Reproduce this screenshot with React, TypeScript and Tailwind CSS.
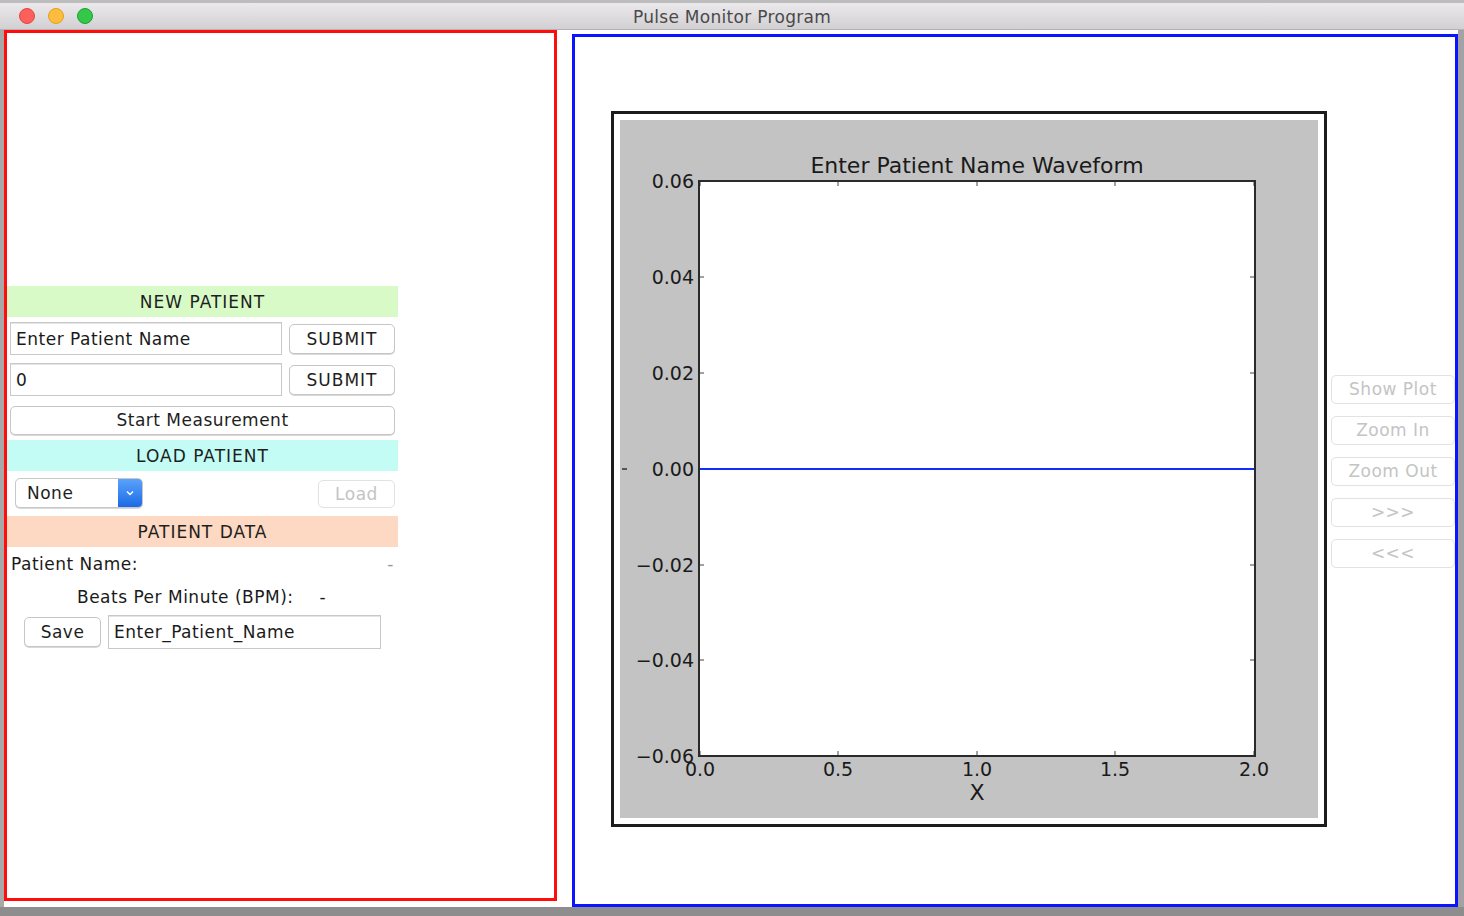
import React from "react";

const uiFont = { fontFamily: '"DejaVu Sans", "Liberation Sans", sans-serif' };

function MacButton({ label, className = "", disabled = false }: { label: string; className?: string; disabled?: boolean }) {
  return (
    <button
      className={
        "flex items-center justify-center rounded-[5px] border bg-white text-[17px] leading-none tracking-[0.5px] " +
        (disabled
          ? "border-[#e2e2e2] text-[#c4c4c4] "
          : "border-[#c6c6c6] text-[#1e1e1e] shadow-[0_1px_0_#d9d9d9] ") +
        className
      }
    >
      {label}
    </button>
  );
}

function TextBox({ value, className = "" }: { value: string; className?: string }) {
  return (
    <div
      className={
        "flex items-center border border-[#c9c9c9] bg-white pl-[5px] pt-[2px] text-[17px] tracking-[0.5px] text-[#1a1a1a] shadow-[inset_0_1px_0_#e4e4e4] " +
        className
      }
    >
      {value}
    </div>
  );
}

function SectionHeader({ label, className }: { label: string; className: string }) {
  return (
    <div
      className={
        "flex h-[31px] items-center justify-center pt-[2px] text-[17px] tracking-[1px] text-[#1e1e1e] " + className
      }
    >
      {label}
    </div>
  );
}

function WaveformPlot() {
  const yTicks = [
    { y: 61, label: "0.06" },
    { y: 157, label: "0.04" },
    { y: 253, label: "0.02" },
    { y: 349, label: "0.00" },
    { y: 445, label: "\u22120.02" },
    { y: 540, label: "\u22120.04" },
    { y: 636, label: "\u22120.06" },
  ];
  const xTicks = [
    { x: 80, label: "0.0" },
    { x: 218, label: "0.5" },
    { x: 357, label: "1.0" },
    { x: 495, label: "1.5" },
    { x: 634, label: "2.0" },
  ];
  return (
    <svg width="698" height="698" viewBox="0 0 698 698" style={{ fontFamily: '"DejaVu Sans", sans-serif' }}>
      <rect x="0" y="0" width="698" height="698" fill="#c3c3c3" />
      <rect x="79" y="61" width="556" height="575" fill="#ffffff" />
      {yTicks.map((t) => (
        <g key={t.label}>
          <line x1="80" y1={t.y} x2="84" y2={t.y} stroke="#444" strokeWidth="1" />
          <line x1="630" y1={t.y} x2="634" y2={t.y} stroke="#444" strokeWidth="1" />
          <text x="74" y={t.y + 7} textAnchor="end" fontSize="19" fill="#1a1a1a">
            {t.label}
          </text>
        </g>
      ))}
      {xTicks.map((t) => (
        <g key={t.label}>
          <line x1={t.x} y1="62" x2={t.x} y2="66" stroke="#444" strokeWidth="1" />
          <line x1={t.x} y1="631" x2={t.x} y2="635" stroke="#444" strokeWidth="1" />
          <text x={t.x} y="656" textAnchor="middle" fontSize="19" fill="#1a1a1a">
            {t.label}
          </text>
        </g>
      ))}
      <line x1="80" y1="349" x2="635" y2="349" stroke="#0f2ff5" strokeWidth="1.8" />
      <rect x="79" y="61" width="556" height="575" fill="none" stroke="#2a2a2a" strokeWidth="2" />
      <rect x="2" y="348" width="5" height="2" fill="#555" />
      <text x="357" y="53" textAnchor="middle" fontSize="22" fill="#1a1a1a">
        Enter Patient Name Waveform
      </text>
      <text x="357" y="680" textAnchor="middle" fontSize="22" fill="#1a1a1a">
        X
      </text>
    </svg>
  );
}

export default function App() {
  const sideButtons = ["Show Plot", "Zoom In", "Zoom Out", ">>>", "<<<"];

  return (
    <div className="flex h-[916px] w-[1464px] flex-col overflow-hidden bg-[#8d8d8d]" style={uiFont}>
      {/* title bar */}
      <div className="relative flex h-[30px] shrink-0 items-center border-t-[3px] border-b border-t-[#bdbdbd] border-b-[#b3b3b3] bg-gradient-to-b from-[#ebe9eb] to-[#d2d0d2]">
        <div className="ml-[19px] flex gap-[13px]">
          <span className="h-[16px] w-[16px] rounded-full border border-[#e2463f] bg-[#fc605c]" />
          <span className="h-[16px] w-[16px] rounded-full border border-[#e1a116] bg-[#fdbc40]" />
          <span className="h-[16px] w-[16px] rounded-full border border-[#17a22b] bg-[#34c84a]" />
        </div>
        <div className="absolute inset-x-0 top-[6px] text-center text-[17px] leading-none tracking-[0.3px] text-[#4a4a4a]">
          Pulse Monitor Program
        </div>
      </div>

      {/* window body */}
      <div className="flex h-[877px] shrink-0 items-start border-l-[4px] border-r-[6px] border-l-[#a8a8a8] border-r-[#a3a3a3] bg-white">
        {/* left panel */}
        <div className="h-[871px] w-[553px] shrink-0 border-[3px] border-[#ff0d0d]">
          <div className="flex w-[391px] flex-col pt-[253px]">
            <SectionHeader label="NEW PATIENT" className="bg-[#d8fac7]" />
            <div className="mt-[5px] flex items-start">
              <TextBox value="Enter Patient Name" className="ml-[3px] h-[33px] w-[272px]" />
              <MacButton label="SUBMIT" className="ml-[7px] mt-[2px] h-[30px] w-[106px] tracking-[1px]" />
            </div>
            <div className="mt-[8px] flex items-start">
              <TextBox value="0" className="ml-[3px] h-[33px] w-[272px]" />
              <MacButton label="SUBMIT" className="ml-[7px] mt-[2px] h-[30px] w-[106px] tracking-[1px]" />
            </div>
            <MacButton label="Start Measurement" className="ml-[3px] mt-[10px] h-[29px] w-[385px]" />
            <SectionHeader label="LOAD PATIENT" className="mt-[5px] bg-[#c3fcf5]" />
            <div className="mt-[7px] flex items-start">
              <div className="ml-[8px] flex h-[30px] w-[128px] overflow-hidden rounded-[5px] border border-[#c8c8c8] bg-white shadow-[0_1px_0_#d9d9d9]">
                <div className="flex flex-1 items-center pl-[11px] pt-[1px] text-[17px] tracking-[0.5px] text-[#1e1e1e]">None</div>
                <div className="flex w-[24px] items-center justify-center bg-gradient-to-b from-[#5aa2fb] to-[#1a6ae6]">
                  <svg width="8" height="6" viewBox="0 0 8 6">
                    <path d="M1 1.5 L4 4.5 L7 1.5" stroke="white" strokeWidth="1.5" fill="none" />
                  </svg>
                </div>
              </div>
              <MacButton label="Load" disabled className="ml-[175px] mt-[2px] h-[28px] w-[77px]" />
            </div>
            <SectionHeader label="PATIENT DATA" className="mt-[8px] bg-[#fdd8c2]" />
            <div className="mt-[8px] flex h-[20px] items-center justify-between pl-[4px] pr-[4px] text-[17px] tracking-[0.5px] text-[#1a1a1a]">
              <span>Patient Name:</span>
              <span className="text-[#9a9a9a]">-</span>
            </div>
            <div className="mt-[13px] flex h-[20px] items-center text-[17px] tracking-[0.5px] text-[#1a1a1a]">
              <span className="ml-[70px]">Beats Per Minute (BPM):</span>
              <span className="ml-[26px]">-</span>
            </div>
            <div className="mt-[7px] flex items-center">
              <MacButton label="Save" className="ml-[17px] h-[30px] w-[77px]" />
              <TextBox value="Enter_Patient_Name" className="ml-[7px] h-[34px] w-[273px]" />
            </div>
          </div>
        </div>

        {/* right panel */}
        <div className="ml-[15px] mt-[4px] flex h-[873px] w-[886px] shrink-0 items-start border-[3px] border-[#0a14ff]">
          <div className="ml-[36px] mt-[74px] shrink-0 border-[3px] border-[#1c1c1c] bg-white p-[6px]">
            <WaveformPlot />
          </div>
          <div className="ml-[4px] mt-[338px] flex w-[124px] flex-col gap-[12px]">
            {sideButtons.map((b) => (
              <MacButton key={b} label={b} disabled className="h-[29px] w-full" />
            ))}
          </div>
        </div>
      </div>
    </div>
  );
}
